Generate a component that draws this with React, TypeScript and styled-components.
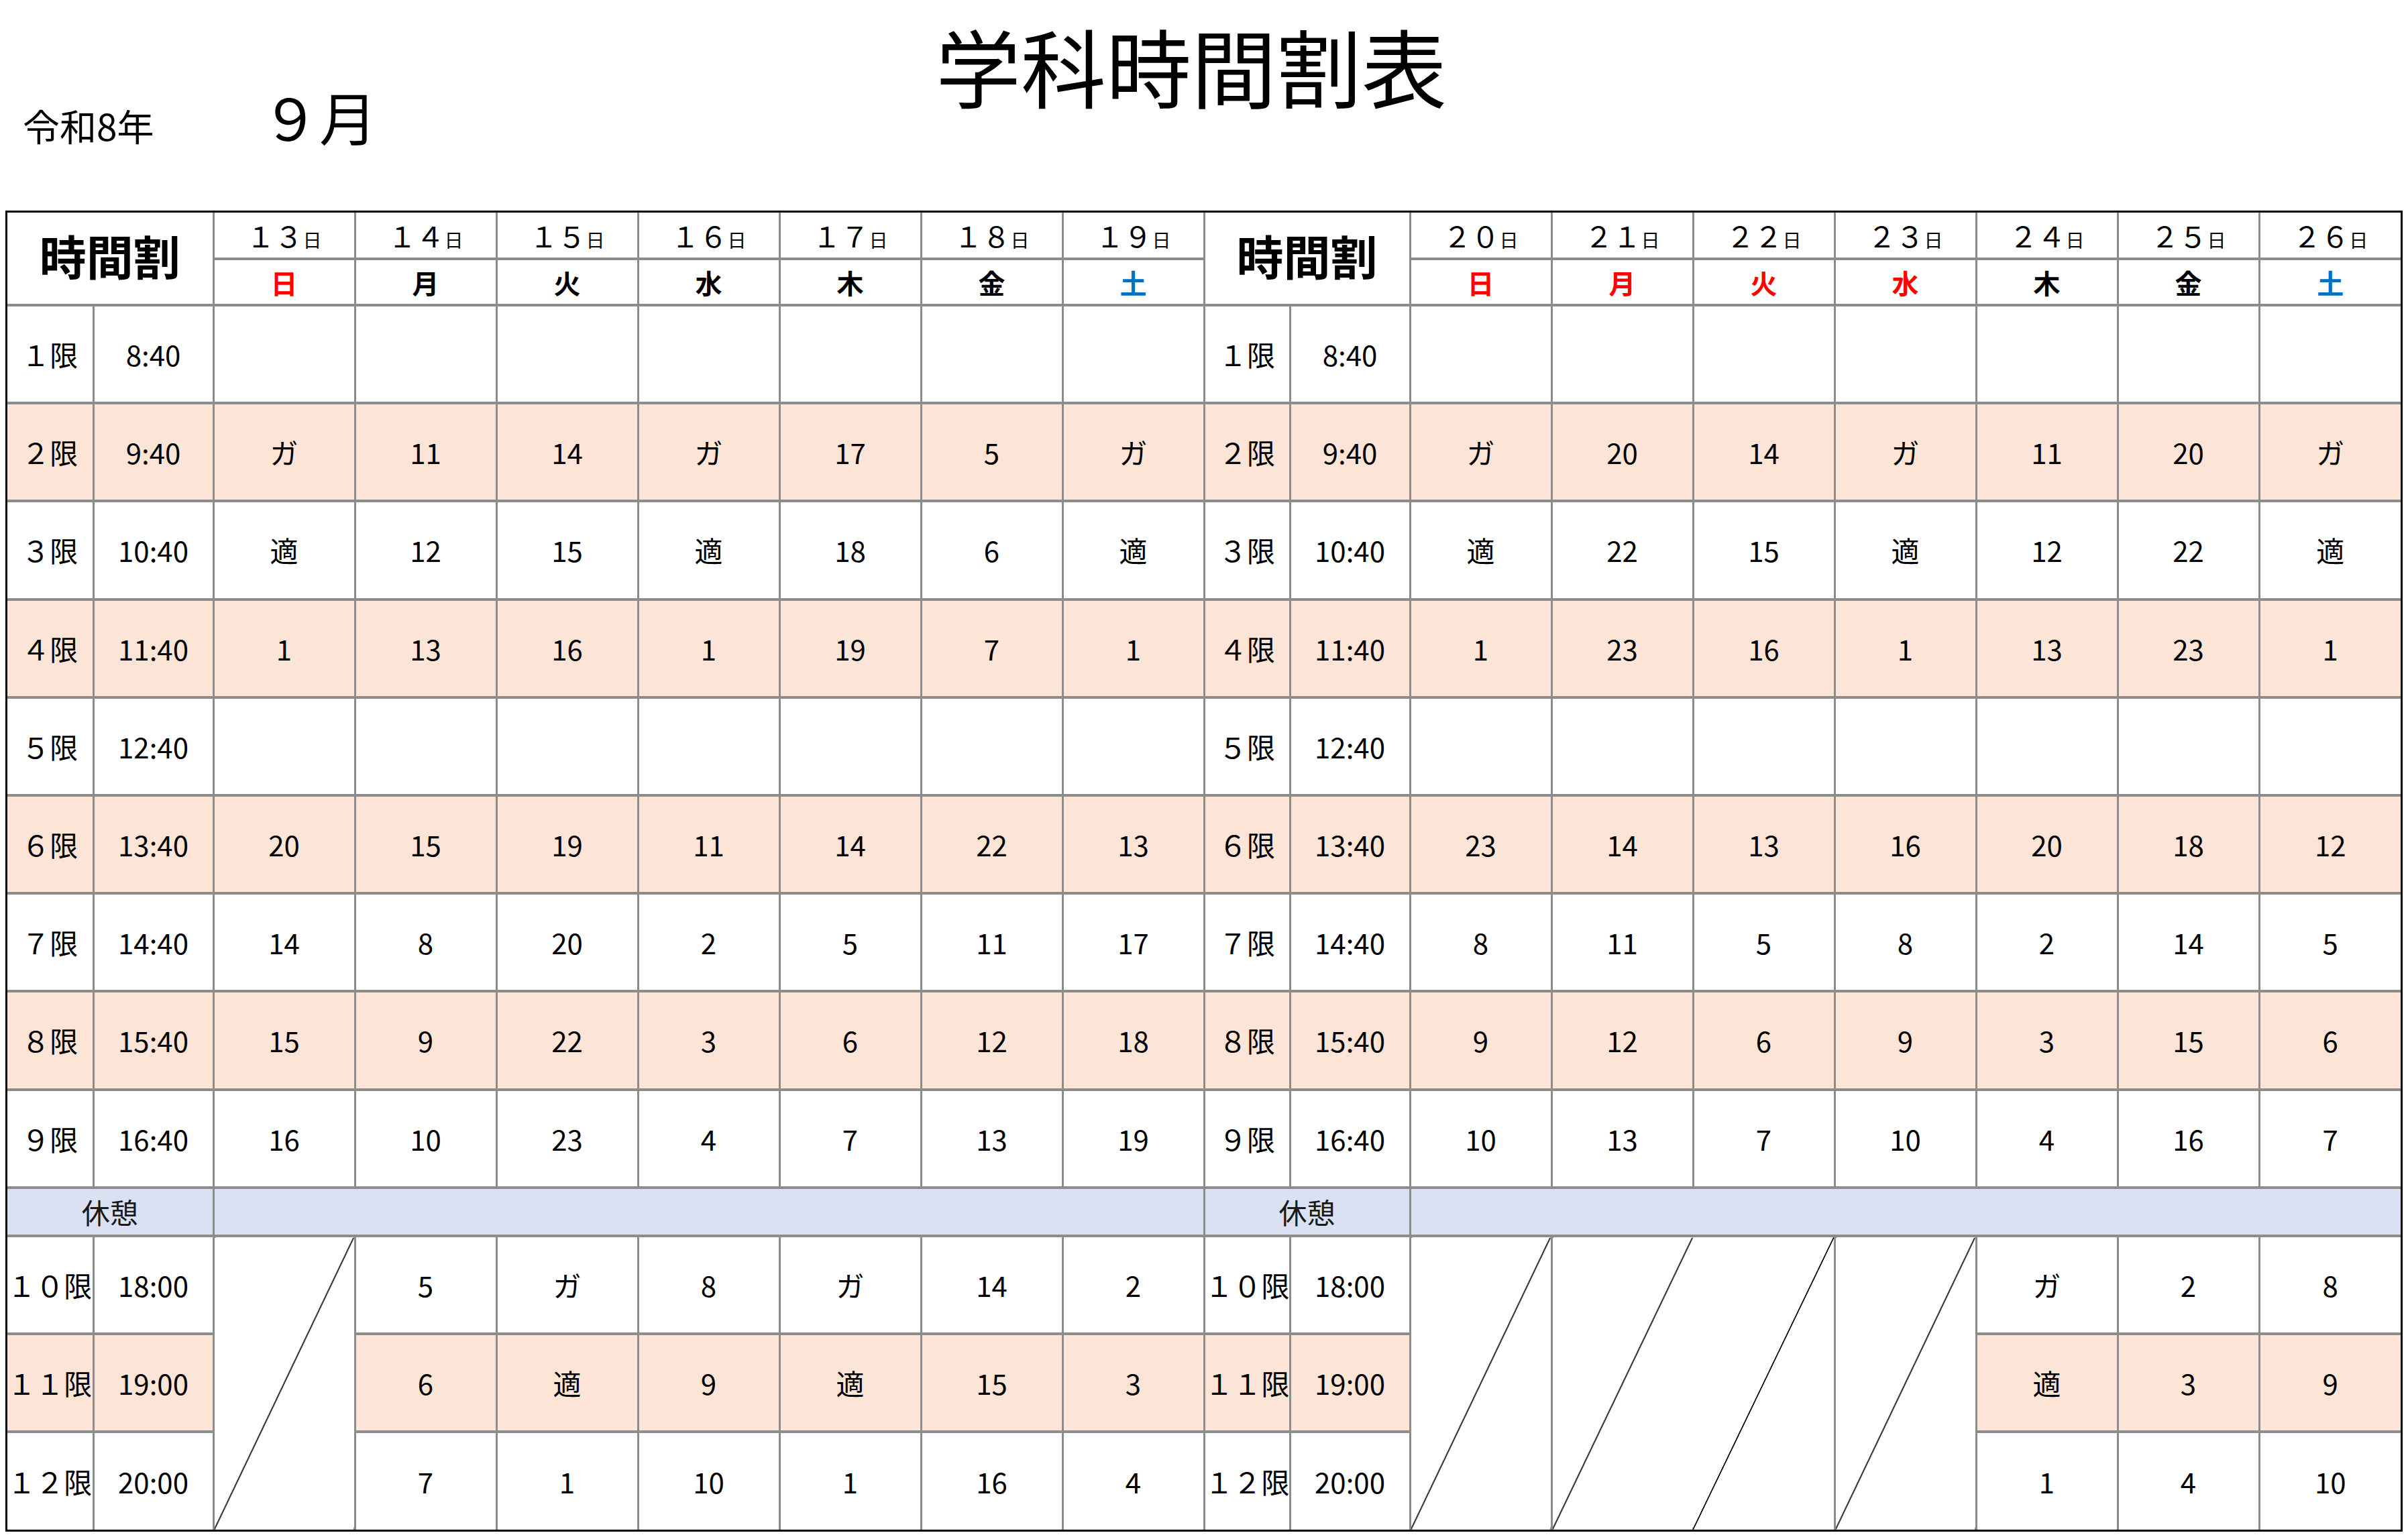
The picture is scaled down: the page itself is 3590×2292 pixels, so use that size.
import React from 'react';
import styled, { createGlobalStyle } from 'styled-components';

const RED = '#ff0000';
const BLUE = '#0070c0';
const PINK = '#fce4d6';
const BREAK_BLUE = '#d9e1f2';
const GRID = '#8c8c8c';

const GlobalStyle = createGlobalStyle`
  body {
    margin: 0;
    background: #ffffff;
    color: #000000;
    font-family: "Noto Sans CJK JP", "Noto Sans", sans-serif;
  }
`;

// 全角数字に変換
const wide = (v: number | string) =>
  String(v).replace(/\d/g, (d) => String.fromCharCode(d.charCodeAt(0) + 0xfee0));

type Day = { label: string; color: string };

type Block = {
  dates: number[];
  days: Day[];
  slots: string[][];
  slashCols: number;
  openSlash: number[];
};

const periods = [
  { no: 1, time: '8:40' },
  { no: 2, time: '9:40' },
  { no: 3, time: '10:40' },
  { no: 4, time: '11:40' },
  { no: 5, time: '12:40' },
  { no: 6, time: '13:40' },
  { no: 7, time: '14:40' },
  { no: 8, time: '15:40' },
  { no: 9, time: '16:40' },
  { no: 10, time: '18:00' },
  { no: 11, time: '19:00' },
  { no: 12, time: '20:00' },
];

const pinkRows = [1, 3, 5, 7, 10];
const empty = ['', '', '', '', '', '', ''];

const blocks: Block[] = [
  {
    dates: [13, 14, 15, 16, 17, 18, 19],
    days: [
      { label: '日', color: RED },
      { label: '月', color: '#000' },
      { label: '火', color: '#000' },
      { label: '水', color: '#000' },
      { label: '木', color: '#000' },
      { label: '金', color: '#000' },
      { label: '土', color: BLUE },
    ],
    slots: [
      empty,
      ['ガ', '11', '14', 'ガ', '17', '5', 'ガ'],
      ['適', '12', '15', '適', '18', '6', '適'],
      ['1', '13', '16', '1', '19', '7', '1'],
      empty,
      ['20', '15', '19', '11', '14', '22', '13'],
      ['14', '8', '20', '2', '5', '11', '17'],
      ['15', '9', '22', '3', '6', '12', '18'],
      ['16', '10', '23', '4', '7', '13', '19'],
      ['', '5', 'ガ', '8', 'ガ', '14', '2'],
      ['', '6', '適', '9', '適', '15', '3'],
      ['', '7', '1', '10', '1', '16', '4'],
    ],
    slashCols: 1,
    openSlash: [],
  },
  {
    dates: [20, 21, 22, 23, 24, 25, 26],
    days: [
      { label: '日', color: RED },
      { label: '月', color: RED },
      { label: '火', color: RED },
      { label: '水', color: RED },
      { label: '木', color: '#000' },
      { label: '金', color: '#000' },
      { label: '土', color: BLUE },
    ],
    slots: [
      empty,
      ['ガ', '20', '14', 'ガ', '11', '20', 'ガ'],
      ['適', '22', '15', '適', '12', '22', '適'],
      ['1', '23', '16', '1', '13', '23', '1'],
      empty,
      ['23', '14', '13', '16', '20', '18', '12'],
      ['8', '11', '5', '8', '2', '14', '5'],
      ['9', '12', '6', '9', '3', '15', '6'],
      ['10', '13', '7', '10', '4', '16', '7'],
      ['', '', '', '', 'ガ', '2', '8'],
      ['', '', '', '', '適', '3', '9'],
      ['', '', '', '', '1', '4', '10'],
    ],
    slashCols: 4,
    openSlash: [1],
  },
];

const colWidths = [128, 179, 211, 211, 211, 211, 211, 211, 211];

function App() {
  const renderHeadRows = () => (
    <>
      <HeadRow $height={69}>
        {blocks.map((b, bi) => (
          <React.Fragment key={bi}>
            <TitleHead colSpan={2} rowSpan={2}>時間割</TitleHead>
            {b.dates.map((d) => (
              <DateCell key={d}>
                <Digits>{wide(d)}</Digits>
                <Suffix>日</Suffix>
              </DateCell>
            ))}
          </React.Fragment>
        ))}
      </HeadRow>
      <HeadRow $height={69}>
        {blocks.map((b, bi) => (
          <React.Fragment key={bi}>
            {b.days.map((d, di) => (
              <WeekdayCell key={di} $color={d.color}>{d.label}</WeekdayCell>
            ))}
          </React.Fragment>
        ))}
      </HeadRow>
    </>
  );

  const renderPeriodRow = (pi: number) => {
    const p = periods[pi];
    const pink = pinkRows.includes(pi);
    const late = pi >= 9;
    return (
      <BodyRow key={p.no} $height={146.2}>
        {blocks.map((b, bi) => {
          const values = b.slots[pi];
          return (
            <React.Fragment key={bi}>
              <Cell $pink={pink}>{wide(p.no)}限</Cell>
              <Cell $pink={pink}>{p.time}</Cell>
              {values.map((v, vi) => {
                if (late && vi < b.slashCols) {
                  if (pi !== 9) return null;
                  return (
                    <SlashCell
                      key={vi}
                      rowSpan={3}
                      $openRight={b.openSlash.includes(vi)}
                    />
                  );
                }
                return (
                  <Cell key={vi} $pink={pink}>
                    {v}
                  </Cell>
                );
              })}
            </React.Fragment>
          );
        })}
      </BodyRow>
    );
  };

  return (
    <Page>
      <GlobalStyle />
      <Header>
        <DateGroup>
          <YearLabel>令和8年</YearLabel>
          <MonthLabel>９月</MonthLabel>
        </DateGroup>
        <Title>学科時間割表</Title>
      </Header>
      <Frame>
        <Sheet>
          <colgroup>
            {[...colWidths, ...colWidths].map((w, i) => (
              <col key={i} style={{ width: w }} />
            ))}
          </colgroup>
          <tbody>
            {renderHeadRows()}
            {[0, 1, 2, 3, 4, 5, 6, 7, 8].map(renderPeriodRow)}
            <BodyRow $height={72}>
              {blocks.map((_, bi) => (
                <React.Fragment key={bi}>
                  <BreakCell colSpan={2}>休憩</BreakCell>
                  <BreakCell colSpan={7} />
                </React.Fragment>
              ))}
            </BodyRow>
            {[9, 10, 11].map(renderPeriodRow)}
          </tbody>
        </Sheet>
      </Frame>
    </Page>
  );
}

export default App;

const Page = styled.div`
  width: 3590px;
  height: 2292px;
  overflow: hidden;
`;

const Header = styled.header`
  display: grid;
  grid-template-columns: 1395px 1fr;
  height: 314px;
`;

const DateGroup = styled.div`
  display: flex;
  align-items: baseline;
  padding: 130px 0 0 34px;
`;

const YearLabel = styled.div`
  width: 356px;
  font-size: 55px;
  line-height: 1;
`;

const MonthLabel = styled.div`
  font-size: 86px;
  line-height: 1;
`;

const Title = styled.h1`
  margin: 0;
  padding-top: 34px;
  font-size: 127px;
  font-weight: 400;
  line-height: 1;
  white-space: nowrap;
`;

const Frame = styled.div`
  margin-left: 8px;
  width: fit-content;
  border: 3px solid #000000;
`;

const Sheet = styled.table`
  table-layout: fixed;
  width: 3568px;
  border-collapse: collapse;
  border-style: hidden;
`;

const HeadRow = styled.tr<{ $height: number }>`
  height: ${(p) => p.$height}px;
`;

const BodyRow = styled.tr<{ $height: number }>`
  height: ${(p) => p.$height}px;
`;

const GridCell = styled.td`
  padding: 0;
  text-align: center;
  vertical-align: middle;
  line-height: 1;
  white-space: nowrap;
  border-left: 3px solid ${GRID};
  border-right: 3px solid ${GRID};
  border-top: 4px solid ${GRID};
  border-bottom: 4px solid ${GRID};
`;

const TitleHead = styled(GridCell).attrs({ as: 'th' })`
  font-size: 70px;
  font-weight: 700;
  padding-bottom: 8px;
`;

const DateCell = styled(GridCell).attrs({ as: 'th' })`
  font-weight: 400;
`;

const Digits = styled.span`
  font-size: 42px;
`;

const Suffix = styled.span`
  font-size: 28px;
`;

const WeekdayCell = styled(GridCell).attrs({ as: 'th' })<{ $color: string }>`
  font-size: 40px;
  font-weight: 700;
  color: ${(p) => p.$color};
`;

const Cell = styled(GridCell)<{ $pink?: boolean }>`
  font-size: 42px;
  background: ${(p) => (p.$pink ? PINK : '#ffffff')};
`;

const BreakCell = styled(GridCell)`
  font-size: 42px;
  background: ${BREAK_BLUE};
  color: #1a1a1a;
`;

// 斜線セル（左下から右上へ）
const SlashCell = styled(GridCell)<{ $openRight?: boolean }>`
  background: linear-gradient(
    to bottom right,
    transparent calc(50% - 1.2px),
    #111111 calc(50% - 0.6px),
    #111111 calc(50% + 0.6px),
    transparent calc(50% + 1.2px)
  );
  ${(p) => (p.$openRight ? 'border-right-style: hidden;' : '')}
`;
